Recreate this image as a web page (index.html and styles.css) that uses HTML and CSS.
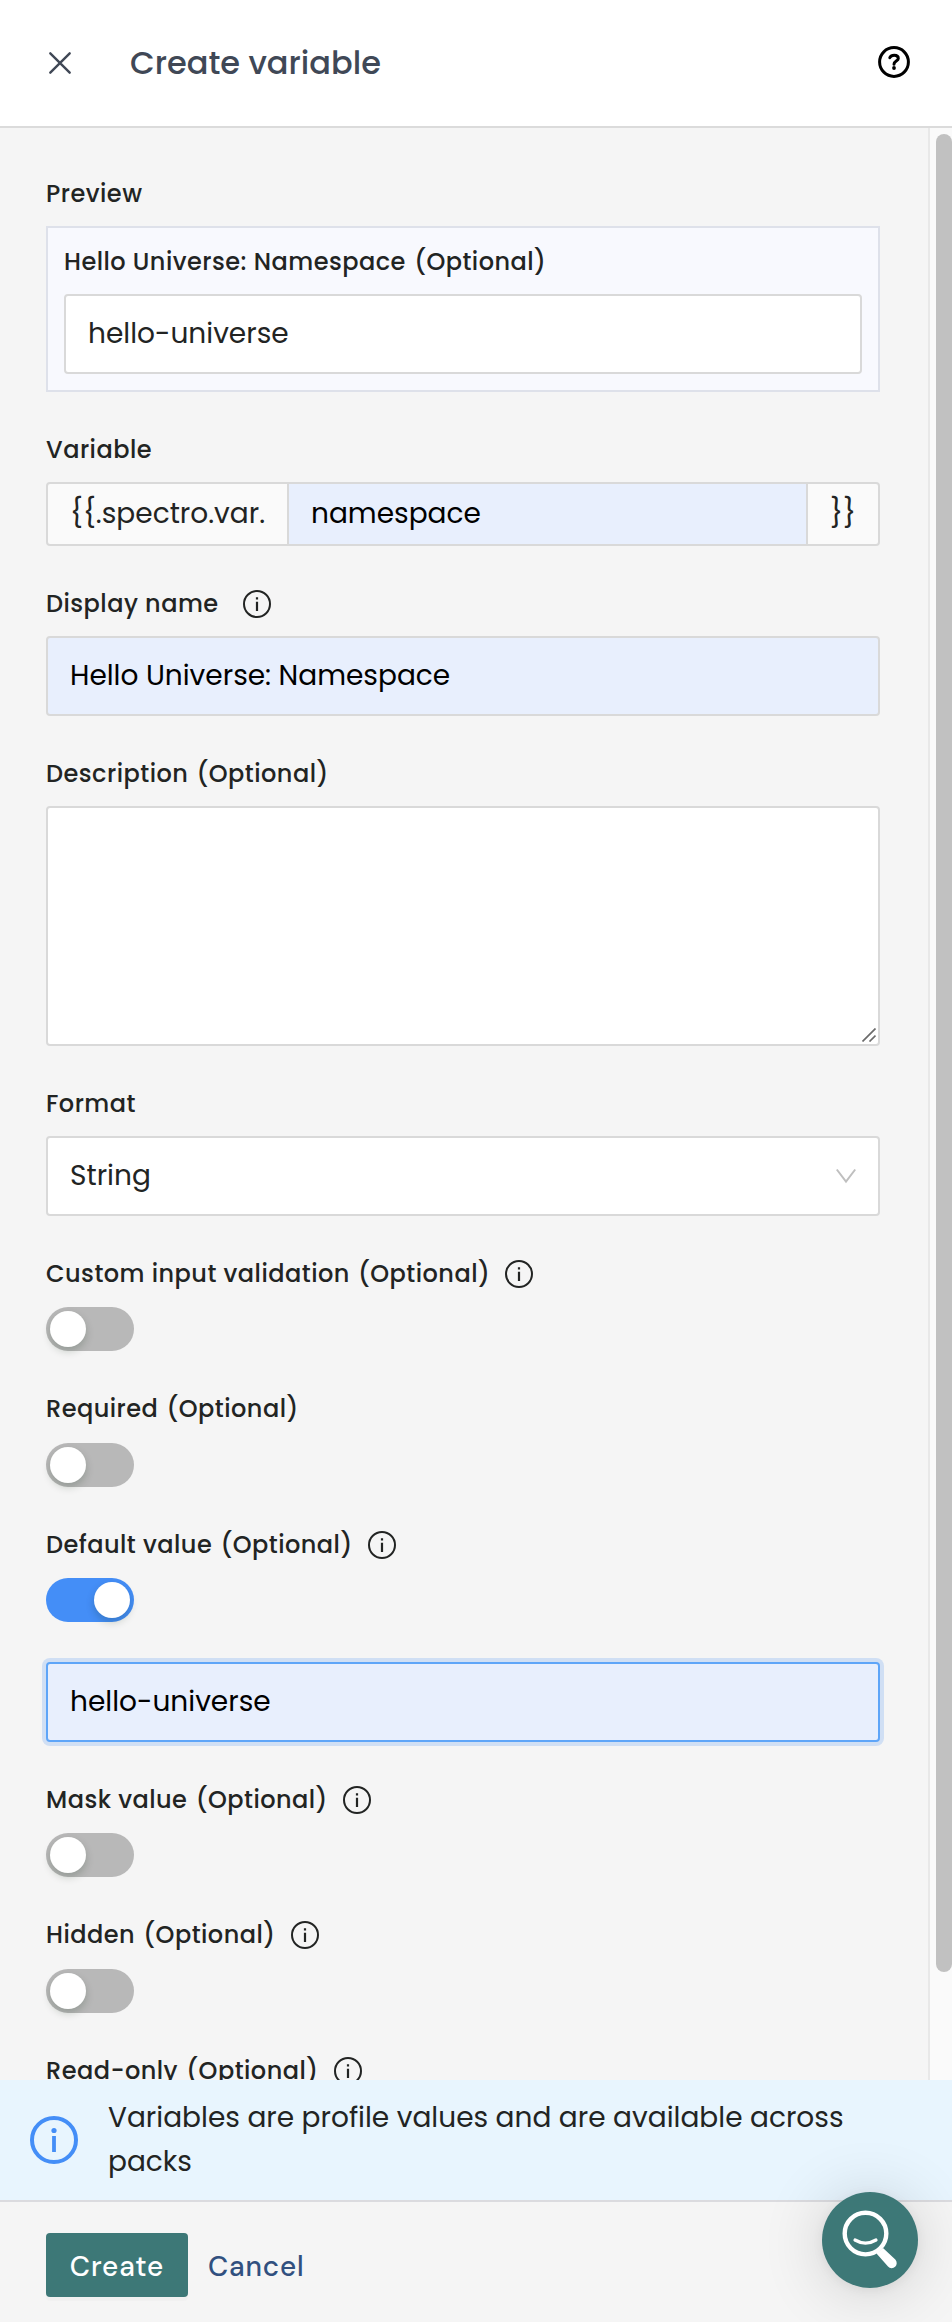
FILE: index.html
```html
<!DOCTYPE html>
<html lang="en">
<head>
<meta charset="utf-8">
<title>Create variable</title>
<link rel="stylesheet" href="styles.css">
</head>
<body>
<svg class="defs" aria-hidden="true">
  <symbol id="info" viewBox="0 0 28 28">
    <circle cx="14" cy="14" r="13" fill="none" stroke="currentColor" stroke-width="2"/>
    <path d="M14 11.7V21M14 7.2V9.6" stroke="currentColor" stroke-width="2.2" fill="none"/>
  </symbol>
</svg>
<div class="drawer">
  <header class="header">
    <svg class="close" viewBox="0 0 24 24"><path d="M2.3 2.3 21.7 21.7M21.7 2.3 2.3 21.7"/></svg>
    <h1 class="title">Create variable</h1>
    <svg class="help" viewBox="0 0 32 32">
      <circle cx="16" cy="16" r="14.4"/>
      <path d="M11.8 11.6C12.8 9.7 14.3 9.3 16.2 9.3C18.6 9.3 20.3 10.5 20.3 12.4C20.3 15 16 15.2 16 18.2"/>
      <circle class="help-dot" cx="16" cy="22" r="1.9"/>
    </svg>
  </header>

  <main class="body">
    <form class="form">
      <section class="field">
        <div class="label"><span>Preview</span></div>
        <div class="preview">
          <div class="label"><span>Hello Universe: Namespace <span class="optional">(Optional)</span></span></div>
          <div class="input">hello-universe</div>
        </div>
      </section>
      <section class="field">
        <div class="label"><span>Variable</span></div>
        <div class="group">
          <div class="addon addon-start">{{.spectro.var.</div>
          <div class="group-value">namespace</div>
          <div class="addon addon-end">}}</div>
        </div>
      </section>
      <section class="field">
        <div class="label label-wide"><span>Display name</span><svg class="info"><use href="#info"/></svg></div>
        <div class="input filled">Hello Universe: Namespace</div>
      </section>
      <section class="field">
        <div class="label"><span>Description <span class="optional">(Optional)</span></span></div>
        <div class="textarea"><svg class="grip" viewBox="0 0 14 14"><path d="M.5 13.5 13.5.5M7.5 13.5 13.5 7.5"/></svg></div>
      </section>
      <section class="field">
        <div class="label"><span>Format</span></div>
        <div class="input select"><span>String</span><svg class="chevron" viewBox="0 0 20 16"><path d="M.8 1.5 10 13.5 19.2 1.5"/></svg></div>
      </section>
      <section class="field">
        <div class="label"><span>Custom input validation <span class="optional">(Optional)</span></span><svg class="info"><use href="#info"/></svg></div>
        <div class="switch"><i></i></div>
      </section>
      <section class="field field-loose">
        <div class="label"><span>Required <span class="optional">(Optional)</span></span></div>
        <div class="switch"><i></i></div>
      </section>
      <section class="field">
        <div class="label"><span>Default value <span class="optional">(Optional)</span></span><svg class="info"><use href="#info"/></svg></div>
        <div class="switch on"><i></i></div>
        <div class="input filled focused">hello-universe</div>
      </section>
      <section class="field">
        <div class="label"><span>Mask value <span class="optional">(Optional)</span></span><svg class="info"><use href="#info"/></svg></div>
        <div class="switch"><i></i></div>
      </section>
      <section class="field field-loose">
        <div class="label"><span>Hidden <span class="optional">(Optional)</span></span><svg class="info"><use href="#info"/></svg></div>
        <div class="switch"><i></i></div>
      </section>
      <section class="field">
        <div class="label"><span>Read-only <span class="optional">(Optional)</span></span><svg class="info"><use href="#info"/></svg></div>
      </section>
    </form>
    <div class="track"><div class="thumb"></div></div>
  </main>

  <div class="banner">
    <svg class="banner-icon" viewBox="0 0 48 48">
      <circle cx="24" cy="24" r="22" fill="none" stroke="#448ef7" stroke-width="4"/>
      <path d="M24 20V36" stroke="#448ef7" stroke-width="3.8"/>
      <circle cx="24" cy="14.5" r="2.6" fill="#448ef7"/>
    </svg>
    <p class="banner-text">Variables are profile values and are available across packs</p>
  </div>

  <footer class="footer">
    <div class="create">Create</div>
    <div class="cancel">Cancel</div>
  </footer>

  <div class="fab">
    <svg viewBox="0 0 96 96">
      <circle cx="43.5" cy="41.6" r="20.8" fill="none" stroke="#fff" stroke-width="4.4"/>
      <path d="M33 48Q43.5 54.2 54 48" fill="none" stroke="#fff" stroke-width="3.2" stroke-linecap="round"/>
      <path d="M54.5 61.5 61 56 73.3 67.6A4.9 4.9 0 0 1 66 74.6Z" fill="#fff"/>
    </svg>
  </div>
</div>
</body>
</html>
```
FILE: styles.css
```css
* { box-sizing: border-box; }
body {
  margin: 0;
  font-family: Poppins, Inter, "Open Sans", sans-serif;
  font-size: 28px;
  line-height: 44px;
  color: #222423;
  background: #f5f5f5;
}
svg { display: block; flex: none; }
.defs { position: absolute; width: 0; height: 0; }
.drawer {
  position: relative;
  width: 952px;
  height: 2322px;
  overflow: hidden;
  display: flex;
  flex-direction: column;
}

.header {
  flex: none;
  height: 128px;
  display: flex;
  align-items: center;
  padding: 0 42px 0 48px;
  background: #fff;
  border-bottom: 2px solid #dbdbdb;
}
.close { width: 24px; height: 24px; fill: none; stroke: #404856; stroke-width: 2.4; stroke-linecap: round; }
.title {
  margin: 0 auto 0 58px;
  font-size: 32px;
  font-weight: 500;
  color: #404856;
}
.help { width: 32px; height: 32px; margin-bottom: 2px; fill: none; stroke: #000; stroke-width: 3; stroke-linecap: round; }
.help-dot { fill: #000; stroke: none; }

.body { flex: 1; min-height: 0; display: flex; overflow: hidden; }
.form {
  flex: 1;
  display: flex;
  flex-direction: column;
  gap: 39px;
  padding: 47px 48px 0 46px;
}
.track {
  width: 24px;
  height: 100%;
  padding: 6px 0 0 6px;
  background: #fafafa;
  border-left: 2px solid #e8e8e8;
}
.thumb { height: 1838px; border-radius: 8px; background: #c1c1c1; }

.field { flex: none; display: flex; flex-direction: column; gap: 15px; }
.label {
  display: flex;
  align-items: center;
  gap: 15px;
  height: 36px;
  padding-top: 2px;
  font-size: 24px;
  font-weight: 500;
  line-height: 34px;
  letter-spacing: .48px;
  white-space: nowrap;
}
.label-wide { gap: 24px; }
.optional { margin-left: 1.5px; }
.info { width: 28px; height: 28px; }

.preview {
  display: flex;
  flex-direction: column;
  gap: 15px;
  padding: 15px 16px 16px;
  border: 2px solid #dee1ea;
  background: #f8f9fe;
}
.input {
  height: 80px;
  display: flex;
  align-items: center;
  padding: 0 22px;
  border: 2px solid #d9d9d9;
  border-radius: 4px;
  background: #fff;
}
.filled { background: #e8effd; color: #000; }
.focused { margin-top: 25px; border-color: #5ea5f8; box-shadow: 0 0 0 4px #d0dff4; }
.select { justify-content: space-between; }
.chevron { width: 20px; height: 16px; fill: none; stroke: #bfbfbf; stroke-width: 2; }

.group {
  display: flex;
  height: 64px;
  border: 2px solid #d9d9d9;
  border-radius: 4px;
  background: #fafafa;
  overflow: hidden;
}
.addon, .group-value { display: flex; align-items: center; }
.addon-start { width: 239px; padding-left: 22px; }
.addon-end { width: 70px; padding-left: 22px; }
.group-value {
  flex: 1;
  padding-left: 22px;
  border: solid #d9d9d9;
  border-width: 0 2px;
  background: #e8effd;
  color: #000;
}

.textarea {
  height: 240px;
  display: flex;
  justify-content: flex-end;
  align-items: flex-end;
  padding: 2px;
  border: 2px solid #d9d9d9;
  border-radius: 4px;
  background: #fff;
}
.grip { width: 14px; height: 14px; fill: none; stroke: #6b6b6b; stroke-width: 1.7; }

.switch {
  width: 88px;
  height: 44px;
  margin-top: 1px;
  padding: 4px;
  border-radius: 22px;
  display: flex;
  background: #b8b8b8;
}
.field-loose .switch { margin-top: 2px; }
.switch i { width: 36px; height: 36px; border-radius: 50%; background: #fff; box-shadow: 0 4px 8px rgba(0, 35, 11, .2); }
.switch.on { justify-content: flex-end; background: #448ef7; }

.banner {
  flex: none;
  height: 120px;
  display: flex;
  align-items: center;
  gap: 30px;
  padding: 0 90px 0 30px;
  background: #e8f5fe;
}
.banner-icon { width: 48px; height: 48px; }
.banner-text { margin: 0; }

.footer {
  flex: none;
  height: 122px;
  display: flex;
  align-items: flex-start;
  padding: 31px 46px 0;
  border-top: 2px solid #dbdbdf;
}
.create, .cancel {
  height: 64px;
  padding-top: 2px;
  font-family: "DM Sans", Inter, sans-serif;
  font-weight: 500;
  font-variation-settings: "opsz" 14;
  line-height: 64px;
  letter-spacing: .85px;
}
.create {
  width: 142px;
  text-align: center;
  color: #fff;
  background: #3d7877;
  border-radius: 4px;
  box-shadow: 0 4px 0 rgba(0, 0, 0, .016);
}
.cancel { margin-left: 20px; color: #31507f; }

.fab {
  position: absolute;
  left: 822px;
  top: 2192px;
  width: 96px;
  height: 96px;
  border-radius: 50%;
  background: #3d7877;
  box-shadow: 0 2px 12px rgba(0, 0, 0, .06), 0 4px 64px rgba(0, 0, 0, .16);
}
```
